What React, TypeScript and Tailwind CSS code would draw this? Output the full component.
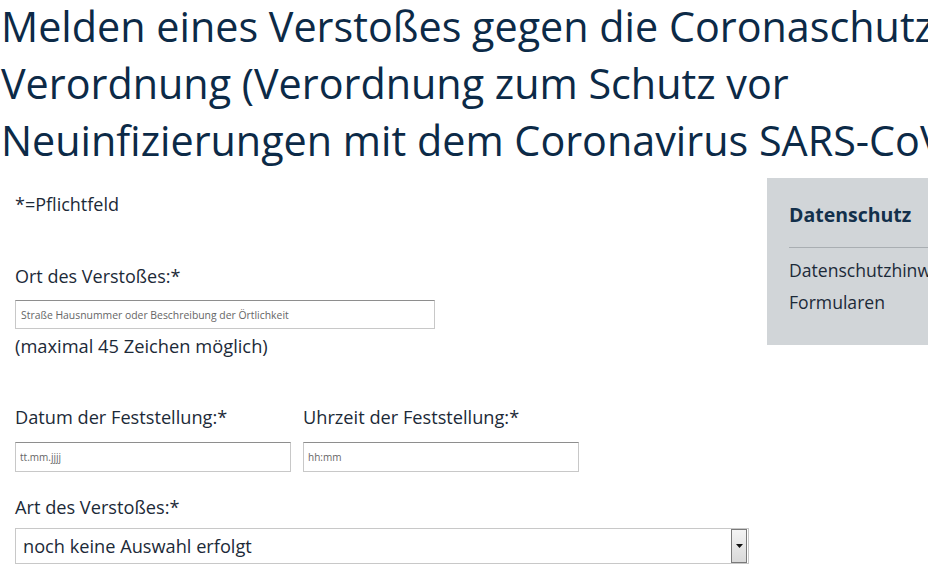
export default function App() {
  const font = { fontFamily: '"Open Sans", "Noto Sans", sans-serif' };

  return (
    <div className="w-[928px] h-[580px] overflow-hidden bg-white text-[#1c2a38]" style={font}>
      <h1 className="pl-[1px] -mt-[2px] text-[41.3px] leading-[57px] font-normal text-[#0c2a47] whitespace-nowrap">
        <div>Melden eines Verstoßes gegen die Coronaschutz-</div>
        <div>Verordnung (Verordnung zum Schutz vor</div>
        <div>Neuinfizierungen mit dem Coronavirus SARS-CoV-2)</div>
      </h1>

      <div className="flex mt-[9px]">
        <div className="w-[767px] shrink-0 pl-[15px] pr-[18px]">
          <p className="text-[18px] leading-[22px] mt-[15px]">*=Pflichtfeld</p>

          <label className="block text-[18px] leading-[24px] mt-[49px]">Ort des Verstoßes:*</label>
          <input
            className="block mt-[12px] w-[420px] h-[29px] border border-[#c8c8c8] border-t-[#8e8e8e] px-[5px] text-[10.4px] placeholder:text-[#666] outline-none"
            placeholder="Straße Hausnummer oder Beschreibung der Örtlichkeit"
          />
          <p className="text-[18.3px] leading-[24px] mt-[5px]">(maximal 45 Zeichen möglich)</p>

          <div className="flex gap-[12px] mt-[47px]">
            <div className="w-[276px]">
              <label className="block text-[18.2px] leading-[24px]">Datum der Feststellung:*</label>
              <input
                className="block mt-[13px] w-[276px] h-[30px] border border-[#c8c8c8] border-t-[#8e8e8e] px-[4px] text-[10px] placeholder:text-[#666] outline-none"
                placeholder="tt.mm.jjjj"
              />
            </div>
            <div className="w-[276px]">
              <label className="block text-[18.2px] leading-[24px]">Uhrzeit der Feststellung:*</label>
              <input
                className="block mt-[13px] w-[276px] h-[30px] border border-[#c8c8c8] border-t-[#8e8e8e] px-[4px] text-[10px] placeholder:text-[#666] outline-none"
                placeholder="hh:mm"
              />
            </div>
          </div>

          <label className="block text-[18.2px] leading-[24px] mt-[23px]">Art des Verstoßes:*</label>
          <div className="mt-[9px] w-[734px] h-[36px] border border-[#c8c8c8] flex items-center">
            <span className="flex-1 pl-[7px] text-[18.2px] leading-[24px]">noch keine Auswahl erfolgt</span>
            <div className="w-[16px] h-[34px] mr-[1px] border border-[#7a7a7a] bg-gradient-to-b from-[#f4f4f4] to-[#d9d9d9] flex items-center justify-center">
              <svg width="7" height="4" viewBox="0 0 7 4">
                <path d="M0 0 H7 L3.5 4 Z" fill="#111" />
              </svg>
            </div>
          </div>
        </div>

        <aside className="w-[200px] shrink-0 h-[167px] bg-[#d1d5d8] pl-[22px] pt-[23px]">
          <h2 className="text-[19.5px] leading-[28px] font-bold text-[#13304b] whitespace-nowrap">Datenschutz</h2>
          <div className="border-t border-[#a9aeb2] mt-[18px]" />
          <p className="mt-[6px] text-[17.6px] leading-[32px] whitespace-nowrap">
            Datenschutzhinweise zu den
            <br />
            Formularen
          </p>
        </aside>
      </div>
    </div>
  );
}
